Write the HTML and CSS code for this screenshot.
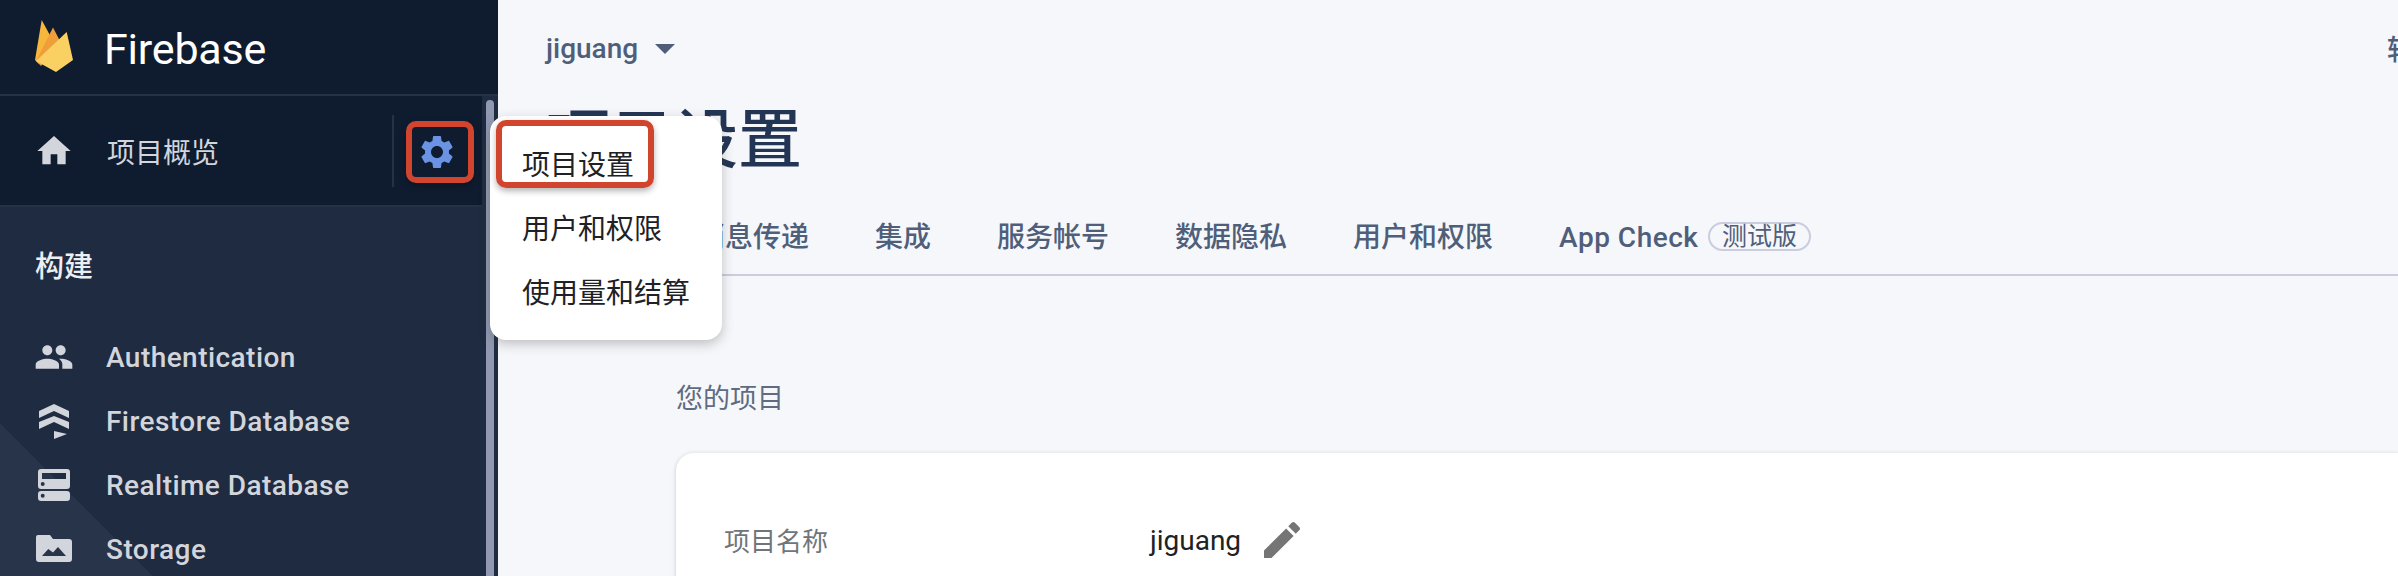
FILE: index.html
```html
<!DOCTYPE html>
<html lang="zh-CN">
<head>
  <meta charset="UTF-8">
  <title>项目设置 - Firebase</title>
  <link rel="stylesheet" href="styles.css">
</head>
<body>
  <div class="app">
    <aside class="sidebar">
      <div class="brand">
        <svg class="logo" viewBox="0 0 38 52">
          <path fill="#f6b73c" d="M0 40 6.7 0 17 19 4 44z"/>
          <path fill="#ef9f3a" d="M1 41 18 7.5 25 21 6 46z"/>
          <path fill="#fbd063" d="M1 41 31.7 12 38 40 21 52z"/>
        </svg>
        <span class="brand-name">Firebase</span>
      </div>
      <div class="sidebar-body">
        <nav class="nav">
          <div class="overview">
            <svg class="icon" viewBox="0 0 24 24"><path d="M10 20v-6h4v6h5v-8h3L12 3 2 12h3v8z"/></svg>
            <span class="overview-label">项目概览</span>
            <span class="overview-settings">
              <svg class="gear" viewBox="0 0 24 24"><path d="M19.14 12.94c.04-.3.06-.61.06-.94 0-.32-.02-.64-.07-.94l2.03-1.58c.18-.14.23-.41.12-.61l-1.92-3.32c-.12-.22-.37-.29-.59-.22l-2.39.96c-.5-.38-1.03-.7-1.62-.94l-.36-2.54c-.04-.24-.24-.41-.48-.41h-3.84c-.24 0-.43.17-.47.41l-.36 2.54c-.59.24-1.13.57-1.62.94l-2.39-.96c-.22-.08-.47 0-.59.22L2.74 8.87c-.12.21-.08.47.12.61l2.03 1.58c-.05.3-.09.63-.09.94s.02.64.07.94l-2.03 1.58c-.18.14-.23.41-.12.61l1.92 3.32c.12.22.37.29.59.22l2.39-.96c.5.38 1.03.7 1.62.94l.36 2.54c.05.24.24.41.48.41h3.84c.24 0 .44-.17.47-.41l.36-2.54c.59-.24 1.13-.56 1.62-.94l2.39.96c.22.08.47 0 .59-.22l1.92-3.32c.12-.22.07-.47-.12-.61l-2.01-1.58zM12 15.6c-1.98 0-3.6-1.62-3.6-3.6s1.62-3.6 3.6-3.6 3.6 1.62 3.6 3.6-1.62 3.6-3.6 3.6z"/></svg>
              <span class="mark mark-gear"></span>
            </span>
          </div>
          <div class="section">
            <div class="section-title">构建</div>
            <ul class="nav-list">
              <li class="nav-item">
                <svg class="icon" viewBox="0 0 24 24"><path d="M16 11c1.66 0 2.99-1.34 2.99-3S17.66 5 16 5c-1.66 0-3 1.34-3 3s1.34 3 3 3zm-8 0c1.66 0 2.99-1.34 2.99-3S9.66 5 8 5C6.34 5 5 6.34 5 8s1.34 3 3 3zm0 2c-2.33 0-7 1.17-7 3.5V19h14v-2.5c0-2.33-4.67-3.5-7-3.5zm8 0c-.29 0-.62.02-.97.05 1.16.84 1.97 1.97 1.97 3.45V19h6v-2.5c0-2.33-4.67-3.5-7-3.5z"/></svg>
                Authentication
              </li>
              <li class="nav-item">
                <svg class="icon" viewBox="0 0 40 40"><path d="M20 3 35 10V17L20 10 5 17V10zM20 15 35 21V28L20 21 5 28V21zM20 30 33 33 20 38z"/></svg>
                Firestore Database
              </li>
              <li class="nav-item">
                <svg class="icon" viewBox="0 0 40 40"><path fill-rule="evenodd" d="M7 4H33A3 3 0 0 1 36 7V21A3 3 0 0 1 33 24H7A3 3 0 0 1 4 21V7A3 3 0 0 1 7 4ZM8 8V14H32V8ZM8.7 17A2 2 0 1 0 8.7 21 2 2 0 1 0 8.7 17ZM7 26H33A3 3 0 0 1 36 29V33A3 3 0 0 1 33 36H7A3 3 0 0 1 4 33V29A3 3 0 0 1 7 26ZM8.7 28.700A2 2 0 1 0 8.7 32.700 2 2 0 1 0 8.700 28.700Z"/></svg>
                Realtime Database
              </li>
              <li class="nav-item">
                <svg class="icon" viewBox="0 0 40 40"><path fill-rule="evenodd" d="M4 6H16L19 10H35A3 3 0 0 1 38 13V30A3 3 0 0 1 35 33H5A3 3 0 0 1 2 30V8A2 2 0 0 1 4 6ZM8 27H32L24 18 19 23.500 14.300 20Z"/></svg>
                Storage
              </li>
            </ul>
          </div>
        </nav>
        <div class="scrollbar"><div class="scrollbar-thumb"></div></div>
      </div>
    </aside>

    <main class="main">
      <div class="topbar">
        <span class="project">jiguang</span>
        <span class="caret"></span>
        <span class="docs">转到文档</span>
      </div>
      <h1 class="title">项目设置</h1>
      <div class="tabs">
        <span>常规</span>
        <span>云消息传递</span>
        <span>集成</span>
        <span>服务帐号</span>
        <span>数据隐私</span>
        <span>用户和权限</span>
        <span class="tab-beta">App Check <em class="badge">测试版</em></span>
      </div>
      <section class="content">
        <h2 class="content-title">您的项目</h2>
        <div class="card">
          <div class="card-row">
            <span class="card-label">项目名称</span>
            <span class="card-value">jiguang</span>
            <svg class="edit" viewBox="0 0 24 24"><path d="M3 17.250V21h3.750L17.810 9.940l-3.750-3.750L3 17.250zM20.710 7.040c.39-.39.39-1.020 0-1.410l-2.340-2.340c-.39-.39-1.020-.39-1.410 0l-1.830 1.830 3.750 3.750 1.830-1.830z"/></svg>
          </div>
        </div>
      </section>
    </main>

    <ul class="menu">
      <li class="menu-item">项目设置<span class="mark mark-item"></span></li>
      <li class="menu-item">用户和权限</li>
      <li class="menu-item">使用量和结算</li>
    </ul>
  </div>
</body>
</html>
```

FILE: styles.css
```css
* {
  box-sizing: border-box;
}
html, body {
  margin: 0;
  height: 100%;
  overflow: hidden;
}
body {
  font-family: Roboto, "Noto Sans CJK SC", sans-serif;
  background-color: #f6f7fa;
  color: #202124;
}
ul {
  list-style: none;
  margin: 0;
  padding: 0;
}

.app {
  position: relative;
  display: flex;
  height: 576px;
  overflow: hidden;
}

/* sidebar */
.sidebar {
  display: flex;
  flex-direction: column;
  flex: none;
  width: 498px;
  background-color: #0f1c30;
}
.brand {
  display: flex;
  align-items: center;
  flex: none;
  height: 96px;
  padding: 0 0 2px 35px;
  border-bottom: 2px solid #253147;
}
.logo {
  width: 38px;
  height: 52px;
  margin-right: 31px;
}
.brand-name {
  margin-top: 5px;
  font-size: 43px;
  letter-spacing: -0.2px;
  color: #fff;
}
.sidebar-body {
  display: flex;
  flex: 1;
  min-height: 0;
}
.nav {
  flex: 1;
  min-width: 0;
}
.overview {
  display: flex;
  align-items: center;
  height: 111px;
  padding-left: 34px;
  border-bottom: 2px solid #253147;
}
.icon {
  flex: none;
  width: 40px;
  height: 40px;
  margin-right: 33px;
  fill: #d2d5dc;
}
.overview-label {
  font-size: 28px;
  color: #d2d5dc;
}
.overview-settings {
  position: relative;
  display: flex;
  align-items: center;
  justify-content: center;
  width: 90px;
  height: 72px;
  margin-left: auto;
  border-left: 2px solid #253147;
}
.gear {
  width: 40px;
  height: 40px;
  margin: 3px 0 0 -2px;
  fill: #6a93e3;
}
.section {
  height: 369px;
  padding-top: 40px;
  background: linear-gradient(45deg, #283449 108px, #1f2b40 108px);
}
.section-title {
  font-size: 29px;
  font-weight: 500;
  line-height: 40px;
  padding-left: 35px;
  color: #eceef2;
}
.nav-list {
  margin-top: 38px;
}
.nav-item {
  display: flex;
  align-items: center;
  height: 64px;
  padding-left: 34px;
  font-size: 28px;
  font-weight: 500;
  letter-spacing: 0.45px;
  color: #d2d5dc;
}
.nav-item .icon {
  margin-right: 32px;
}
.scrollbar {
  flex: none;
  width: 16px;
  padding: 4px 4px 0;
  background-color: #1f2b40;
}
.scrollbar-thumb {
  width: 8px;
  height: 100%;
  border-radius: 4px 4px 0 0;
  background-color: #9099b1;
}

/* main area */
.main {
  flex: 1;
  min-width: 0;
  overflow: hidden;
}
.topbar {
  display: flex;
  align-items: center;
  height: 96px;
  padding-left: 48px;
  font-size: 28px;
  font-weight: 500;
  color: #4f5f7a;
}
.caret {
  width: 0;
  height: 0;
  margin: 2px 0 0 17px;
  border-left: 10px solid transparent;
  border-right: 10px solid transparent;
  border-top: 10px solid #4f5f7a;
}
.docs {
  flex: none;
  margin-left: auto;
  margin-right: -101px;
}
.title {
  margin: 0;
  height: 90px;
  padding-left: 48px;
  font-size: 64px;
  font-weight: 500;
  line-height: 89px;
  color: #233554;
}
.tabs {
  display: flex;
  align-items: center;
  gap: 66px;
  height: 90px;
  padding: 32px 0 16px 49px;
  border-bottom: 2px solid #c9cddd;
  font-size: 28px;
  font-weight: 500;
  line-height: 40px;
  color: #4f5f7a;
  white-space: nowrap;
}
.tab-beta {
  letter-spacing: 0.5px;
}
.badge {
  display: inline-block;
  margin-left: 2px;
  padding: 0 12px;
  border: 2px solid #c9cddd;
  border-radius: 15px;
  font-size: 25px;
  font-style: normal;
  font-weight: 400;
  line-height: 25px;
  letter-spacing: 0;
  vertical-align: 2px;
}
.content {
  padding: 103px 0 0 178px;
}
.content-title {
  margin: 0;
  font-size: 27px;
  font-weight: 400;
  line-height: 40px;
  color: #5f6b80;
}
.card {
  height: 200px;
  margin-top: 34px;
  padding: 67px 48px 0;
  border-radius: 18px 0 0 0;
  background-color: #fff;
  box-shadow: 0 1px 4px rgba(60, 64, 67, 0.25);
}
.card-row {
  display: flex;
  align-items: center;
  height: 40px;
}
.card-label {
  width: 426px;
  margin-bottom: 2px;
  font-size: 26px;
  color: #70757a;
}
.card-value {
  font-size: 28px;
  color: #202124;
}
.edit {
  width: 48px;
  height: 48px;
  margin-left: 17px;
  fill: #757575;
}

/* settings menu, open over the page */
.menu {
  position: absolute;
  left: 490px;
  top: 116px;
  width: 232px;
  height: 224px;
  padding-top: 18px;
  border-radius: 16px;
  background-color: #fff;
  box-shadow: 0 4px 12px rgba(60, 64, 67, 0.3);
}
.menu-item {
  position: relative;
  height: 64px;
  padding-left: 32px;
  font-size: 28px;
  line-height: 64px;
  color: #202124;
}

/* red annotation boxes */
.mark {
  position: absolute;
  border: 6px solid #d1452f;
  border-radius: 10px;
  box-shadow: 0 3px 6px rgba(0, 0, 0, 0.3);
}
.mark-gear {
  left: 12px;
  top: 6px;
  width: 68px;
  height: 62px;
}
.mark-item {
  left: 6px;
  top: -14px;
  width: 158px;
  height: 68px;
}
```
